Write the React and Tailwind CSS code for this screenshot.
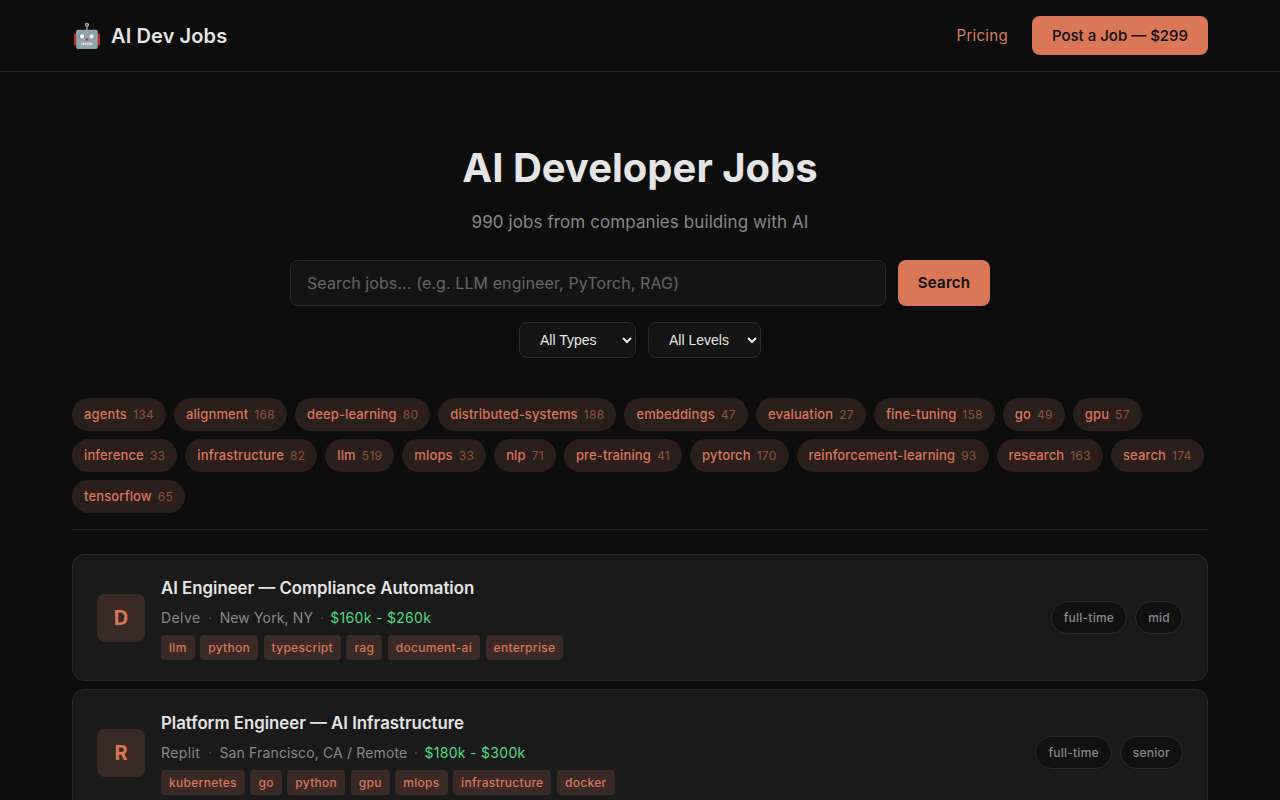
const tags = [
  ['agents', 134], ['alignment', 168], ['deep-learning', 80], ['distributed-systems', 188],
  ['embeddings', 47], ['evaluation', 27], ['fine-tuning', 158], ['go', 49], ['gpu', 57],
  ['inference', 33], ['infrastructure', 82], ['llm', 519], ['mlops', 33], ['nlp', 71],
  ['pre-training', 41], ['pytorch', 170], ['reinforcement-learning', 93], ['research', 163],
  ['search', 174], ['tensorflow', 65],
];

const jobs = [
  {
    letter: 'D',
    title: 'AI Engineer — Compliance Automation',
    company: 'Delve',
    location: 'New York, NY',
    salary: '$160k - $260k',
    tags: ['llm', 'python', 'typescript', 'rag', 'document-ai', 'enterprise'],
    badges: ['full-time', 'mid'],
  },
  {
    letter: 'R',
    title: 'Platform Engineer — AI Infrastructure',
    company: 'Replit',
    location: 'San Francisco, CA / Remote',
    salary: '$180k - $300k',
    tags: ['kubernetes', 'go', 'python', 'gpu', 'mlops', 'infrastructure', 'docker'],
    badges: ['full-time', 'senior'],
  },
];

function JobCard({ job }) {
  return (
    <div className="flex items-center gap-4 bg-[#1a1a1a] border border-[#2a2a2a] rounded-xl px-6 py-5">
      <div className="w-12 h-12 rounded-lg bg-[#3a2a25] text-[#d97757] flex items-center justify-center text-xl font-bold shrink-0">
        {job.letter}
      </div>
      <div className="flex-1 min-w-0">
        <div className="text-[#e5e5e5] text-[16.8px] leading-[26.88px] font-semibold mb-1">{job.title}</div>
        <div className="flex items-center text-sm leading-[23.04px] tracking-[0.1px] text-[#888]">
          <span className="tracking-[0.4px]">{job.company}</span>
          <span className="mx-[7.5px] text-[#555]">·</span>
          <span className="tracking-[0.14px]">{job.location}</span>
          <span className="mx-[6.5px] text-[#555]">·</span>
          <span className="text-[#4ade80] tracking-[0.3px]">{job.salary}</span>
        </div>
        <div className="flex gap-[5.6px] mt-[6px]">
          {job.tags.map((t) => (
            <span key={t} className="bg-[#3a2a25] text-[#d97757] text-xs leading-[19.2px] tracking-[0.29px] font-medium px-2 py-[3px] rounded">
              {t}
            </span>
          ))}
        </div>
      </div>
      <div className="flex items-center gap-2 shrink-0">
        {job.badges.map((b) => (
          <span key={b} className="bg-[#111] border border-[#2a2a2a] text-[#888] text-xs leading-[19.2px] tracking-[0.25px] font-medium px-3 py-[6px] rounded-full">
            {b}
          </span>
        ))}
      </div>
    </div>
  );
}

function App() {
  return (
    <div className="min-h-screen bg-[#0d0d0d] font-['Inter',sans-serif] text-[#e5e5e5]">
      <header className="h-[72px] border-b border-[#2a2a2a]">
        <div className="max-w-[1200px] mx-auto px-8 h-full flex items-center justify-between">
          <div className="flex items-center gap-[9px] text-xl font-semibold tracking-[0.1px]">
            <span className="text-2xl leading-none">🤖</span>
            <span>AI Dev Jobs</span>
          </div>
          <div className="flex items-center gap-6">
            <a className="text-[#d4805f] text-[15.2px] leading-[23px] tracking-[0.2px] -mt-px">Pricing</a>
            <a className="bg-[#d97757] text-[#0d0d0d] text-[15px] leading-[23px] font-medium px-5 py-2 rounded-lg">
              Post a Job — $299
            </a>
          </div>
        </div>
      </header>

      <main className="max-w-[1200px] mx-auto px-8">
        <section className="pt-[72px] flex flex-col items-center">
          <h1 className="text-[40px] leading-[48px] font-bold mb-4">AI Developer Jobs</h1>
          <p className="text-[17px] leading-[28px] tracking-[0.09px] text-[#888] mb-6">990 jobs from companies building with AI</p>
          <div className="flex gap-3 w-[700px]">
            <input
              placeholder="Search jobs... (e.g. LLM engineer, PyTorch, RAG)"
              className="flex-1 h-[46px] bg-[#141414] border border-[#2a2a2a] rounded-lg px-4 text-base tracking-[0.1px] text-[#e5e5e5] placeholder:text-[#666] outline-none"
            />
            <button className="w-[92px] h-[46px] bg-[#d97757] text-[#0d0d0d] text-[15px] tracking-[0.3px] font-semibold rounded-lg">
              Search
            </button>
          </div>
          <div className="flex gap-3 mt-4">
            <select className="h-[36px] w-[117px] bg-[#141414] border border-[#2a2a2a] rounded-lg pl-4 pr-1 text-sm text-[#e5e5e5] font-['Liberation_Sans',sans-serif]">
              <option>All Types</option>
            </select>
            <select className="h-[36px] w-[113px] bg-[#141414] border border-[#2a2a2a] rounded-lg pl-4 pr-1 text-sm text-[#e5e5e5] font-['Liberation_Sans',sans-serif]">
              <option>All Levels</option>
            </select>
          </div>
        </section>

        <section className="flex flex-wrap gap-2 mt-10 pb-4 border-b border-[#2a2a2a]">
          {tags.map(([name, count]) => (
            <span key={name} className="bg-[#2a1f1b] text-[#d97757] text-[13px] leading-[21px] tracking-[0.13px] font-medium px-3 py-[6px] rounded-full">
              {name}
              <span className="ml-[6px] text-xs tracking-[0.3px] font-normal text-[#d97757]/60">{count}</span>
            </span>
          ))}
        </section>

        <section className="flex flex-col gap-2 mt-6">
          {jobs.map((job) => (
            <JobCard key={job.title} job={job} />
          ))}
        </section>
      </main>
    </div>
  );
}

export default App;
